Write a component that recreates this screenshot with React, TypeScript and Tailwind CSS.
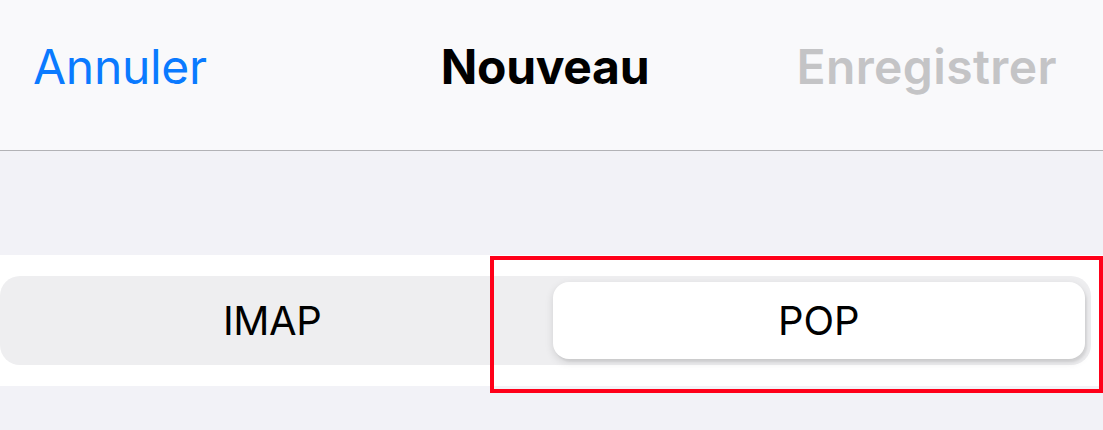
export default function App() {
  return (
    <div className="relative w-[1103px] h-[430px] overflow-hidden bg-[#f2f2f7] font-['Inter',sans-serif]">
      {/* barre de navigation */}
      <header className="h-[151px] border-b border-[#b2b2b6] bg-[#f9f9fb] grid grid-cols-[1fr_auto_1fr] items-center pl-[33px] pr-[46px] pb-[17px]">
        <button className="justify-self-start text-[48px] leading-none text-[#0a7aff] tracking-[-0.3px]">Annuler</button>
        <h1 className="text-[48px] leading-none font-bold text-black tracking-[-0.3px]">Nouveau</h1>
        <button className="justify-self-end text-[48px] leading-none font-semibold text-[#c4c4c6] tracking-[0.4px]">Enregistrer</button>
      </header>

      <div className="h-[104px]" />

      <section className="bg-white py-[21px]">
        <div className="mr-[12px] h-[89px] rounded-[20px] bg-[#eeeef0] p-[6px] grid grid-cols-2 gap-[14px]">
          <div className="flex items-center justify-center text-[40px] text-black tracking-[-0.4px]">IMAP</div>
          <div className="flex items-center justify-center rounded-[16px] bg-white text-[40px] text-black shadow-[0_3px_8px_rgba(0,0,0,0.12),2px_3px_2px_rgba(0,0,0,0.06)]">
            POP
          </div>
        </div>
      </section>

      {/* cadre rouge de mise en évidence */}
      <div className="absolute left-[490px] top-[256px] w-[613px] h-[137px] border-4 border-[#ff0019] pointer-events-none" />
    </div>
  );
}
